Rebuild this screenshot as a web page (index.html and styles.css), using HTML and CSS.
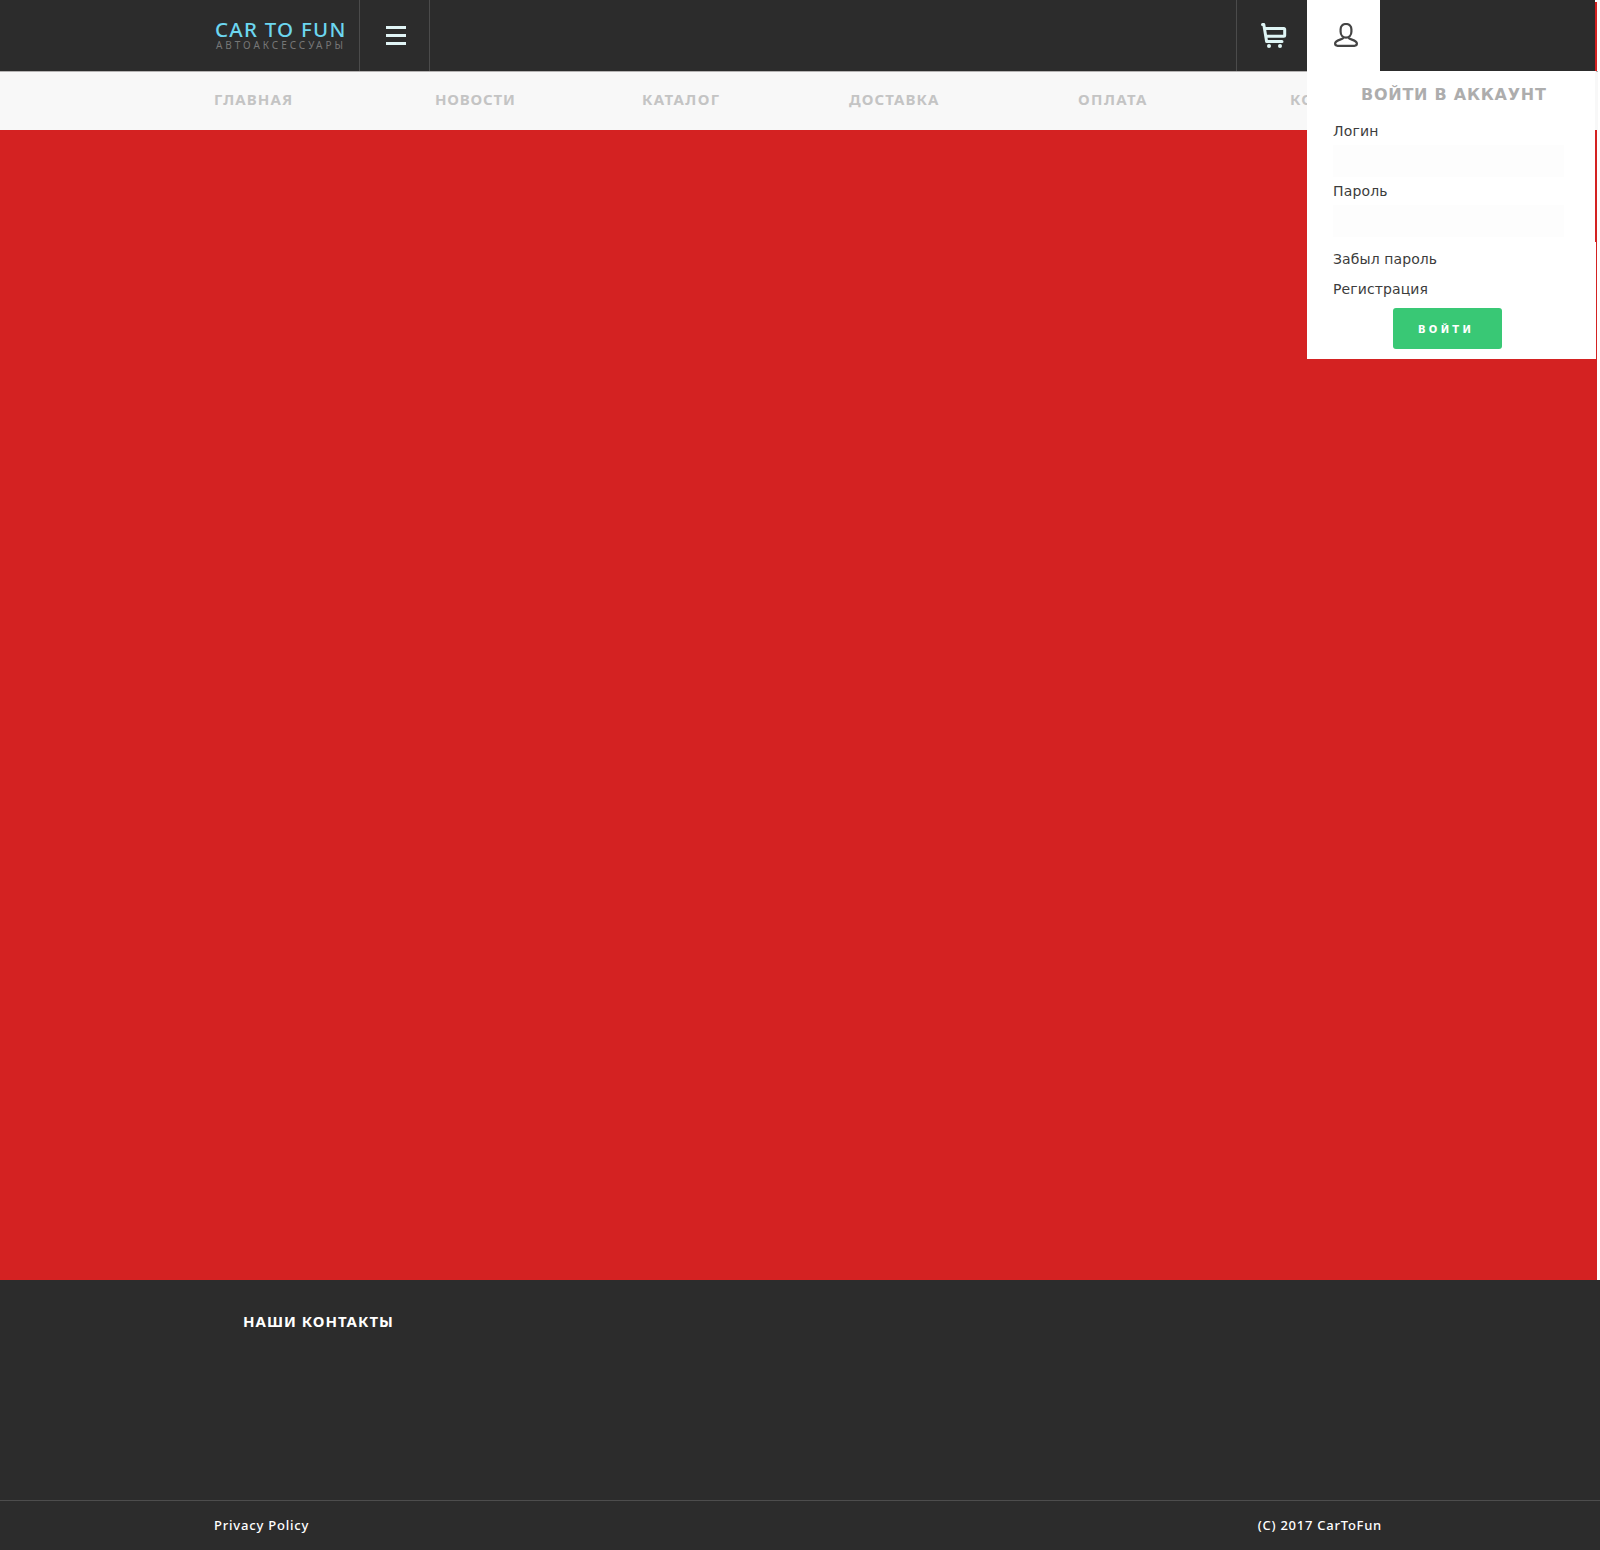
FILE: index.html
```html
<!DOCTYPE html>
<html lang="ru">
<head>
<meta charset="utf-8">
<title>CAR TO FUN</title>
<link rel="stylesheet" href="styles.css">
</head>
<body>
<div class="page">
  <header class="header">
    <a class="logo"><span class="logo-name">CAR TO FUN</span><span class="logo-sub">АВТОАКСЕССУАРЫ</span></a>
    <div class="menu-button">
      <svg width="20" height="20" viewBox="0 0 20 20" fill="#e0f4f5"><path d="M0 0h20v3H0zM0 8h20v3H0zM0 16h20v3H0z"/></svg>
    </div>
    <div class="cart">
      <svg width="26" height="26" viewBox="0 0 26 26" fill="none" stroke="#dff5f5" stroke-width="3" stroke-linecap="round" stroke-linejoin="round"><path d="M1.500 1.500h1.300L5.600 18.500H21M4 5.500h19a.7.7 0 0 1 .7.7v6.300a.8.8 0 0 1-.8.8H5"/><g fill="#dff5f5" stroke="none"><circle cx="8" cy="23" r="2"/><circle cx="19" cy="23" r="2"/></g></svg>
    </div>
    <div class="user">
      <svg width="24" height="24" viewBox="0 0 24 24" fill="none" stroke="#444" stroke-width="2.200" stroke-linejoin="round"><path d="M12 1C8.600 1 6.600 3.200 6.600 6.200v2.600c0 3.400 2.400 5.800 5.400 5.800s5.400-2.400 5.400-5.800V6.200C17.400 3.200 15.400 1 12 1z"/><path d="M9.500 14.800C8.500 16.800 1.100 16.900 1.100 20.600c0 1.500 1 2.200 2.500 2.200h16.800c1.500 0 2.500-.7 2.500-2.200 0-3.700-7.400-3.800-8.400-5.800"/></svg>
    </div>
  </header>
  <nav class="nav">
    <a>ГЛАВНАЯ</a><a>НОВОСТИ</a><a>КАТАЛОГ</a><a>ДОСТАВКА</a><a>ОПЛАТА</a><a>КОНТАКТЫ</a>
  </nav>
  <main class="content"></main>
  <footer class="footer">
    <div class="contacts"><h2>НАШИ КОНТАКТЫ</h2></div>
    <div class="legal"><a>Privacy Policy</a><span class="copyright">(C) 2017 CarToFun</span></div>
  </footer>
  <div class="edge"></div>
  <form class="login">
    <h3>ВОЙТИ В АККАУНТ</h3>
    <label for="user">Логин</label>
    <input id="user" type="text">
    <label for="pass">Пароль</label>
    <input id="pass" type="password">
    <a class="forgot">Забыл пароль</a>
    <a class="register">Регистрация</a>
    <button type="button">ВОЙТИ</button>
  </form>
</div>
</body>
</html>
```
FILE: styles.css
```css
* { box-sizing: border-box; }
body { margin: 0; background: #fff; font-family: "Noto Sans", sans-serif; }
.page { position: relative; width: 1600px; height: 1550px; display: flex; flex-direction: column; overflow: hidden; }
.header { width: 1595px; height: 71px; background: #2c2c2c; display: flex; flex: none; }
.logo { width: 360px; border-right: 1px solid #4b4b4b; padding: 17px 0 0 214px; display: flex; flex-direction: column; white-space: nowrap; }
.logo-name { font-size: 20.5px; line-height: 24px; letter-spacing: 1.25px; color: #6cd6f0; font-weight: 500; padding-left: 1px; }
.logo-sub { font-size: 10px; line-height: 8px; letter-spacing: 2.95px; color: #777; padding-left: 2px; }
.menu-button { width: 70px; border-right: 1px solid #4b4b4b; padding: 26px 0 0 26px; }
.cart { width: 71px; margin-left: 806px; border-left: 1px solid #4b4b4b; padding: 23px 0 0 24px; }
.user { width: 73px; background: #fff; padding: 23px 0 0 27px; }
.header svg { display: block; }
.nav { width: 1598px; height: 59px; flex: none; border-top: 1px solid #b5b3b3; background: #f8f8f8; padding-left: 214px; display: grid; grid-template-columns: 221px 207px 207px 229px 212px 150px; font-weight: 700; font-size: 15px; line-height: 54px; letter-spacing: 1.1px; color: #c4c4c4; }
.nav a:nth-child(2) { letter-spacing: .8px; }
.nav a:nth-child(3), .nav a:nth-child(5) { letter-spacing: 1.4px; }
.content { width: 1597px; height: 1150px; background: #d42222; flex: none; }
.footer { height: 270px; background: #2c2c2c; color: #fff; display: flex; flex-direction: column; }
.contacts { height: 220px; padding: 29px 0 0 243px; }
.contacts h2 { margin: 0; font-size: 15px; line-height: 24px; letter-spacing: 1px; }
.legal { height: 50px; border-top: 1px solid #4d4d4d; display: flex; justify-content: space-between; padding: 0 218px 0 214px; font-size: 13px; line-height: 49px; font-weight: 500; letter-spacing: .8px; }
.copyright { letter-spacing: .75px; }
.edge { position: absolute; left: 1595px; top: 2px; width: 2px; height: 69px; background: #d42222; }
.login { position: absolute; left: 1307px; top: 71px; width: 289px; height: 288px; background: #fff; padding: 13px 32px 0 26px; font-family: "DejaVu Sans", sans-serif; font-size: 14px; color: #3c3c3c; display: flex; flex-direction: column; }
.login::after { content: ""; position: absolute; right: 0; top: 0; width: 1px; height: 171px; background: linear-gradient(#f8f8f8 59px, #d42222 59px); }
.login h3 { margin: 0 0 13px 28px; font-size: 16px; line-height: 22px; letter-spacing: .75px; color: #adadad; white-space: nowrap; }
.login label { line-height: 24px; letter-spacing: .15px; }
.login input { width: 231px; height: 32px; border: 0; margin: 2px 0; background: #fdfdfd; flex: none; }
.forgot { line-height: 30px; margin-top: 5px; letter-spacing: .1px; }
.register { line-height: 30px; letter-spacing: .1px; }
.login button { width: 109px; height: 41px; flex: none; margin: 4px 0 0 60px; border: 0; border-radius: 3px; background: #39c875; color: #fff; font: 700 10px "DejaVu Sans", sans-serif; letter-spacing: 3.3px; padding: 1px 3px 0 0; }
```
